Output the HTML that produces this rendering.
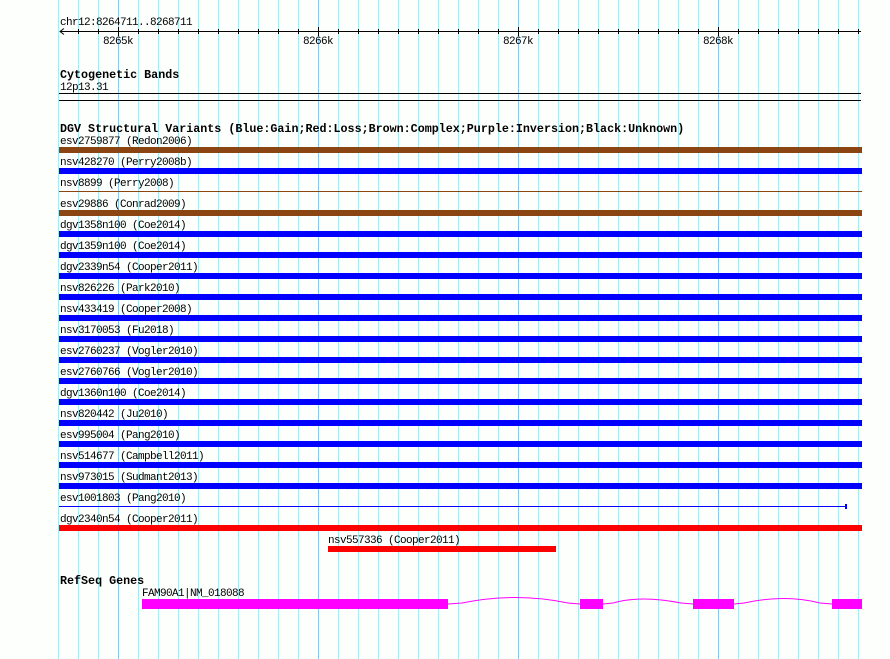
<!DOCTYPE html>
<html><head><meta charset="utf-8"><style>
html,body{margin:0;padding:0;background:#fdfffd;}
svg{display:block}
text{font-family:"Liberation Mono",monospace;font-size:11px;letter-spacing:-0.6px;fill:#000}
.b{font-weight:bold;font-size:11.7px;letter-spacing:0px}
</style></head><body>
<svg width="890" height="659" viewBox="0 0 890 659" xmlns="http://www.w3.org/2000/svg">
<rect width="890" height="659" fill="#fdfffd"/>
<g id="grid" stroke-width="1"></g>
<text x="60" y="25">chr12:8264711..8268711</text>
<line x1="60" y1="31.5" x2="861" y2="31.5" stroke="#000"/>
<path d="M64 28.5 L60 31.5 L64 34.5" fill="none" stroke="#000"/>
<g id="ticks" stroke="#000"></g>
<text x="103" y="44">8265k</text>
<text x="303" y="44">8266k</text>
<text x="503" y="44">8267k</text>
<text x="703" y="44">8268k</text>
<text class="b" x="60" y="78">Cytogenetic Bands</text>
<text x="60" y="90">12p13.31</text>
<line x1="59" y1="93.5" x2="861" y2="93.5" stroke="#000"/>
<line x1="59" y1="100.5" x2="861" y2="100.5" stroke="#000"/>
<text class="b" x="60" y="132">DGV Structural Variants (Blue:Gain;Red:Loss;Brown:Complex;Purple:Inversion;Black:Unknown)</text>
<g id="rows"></g>
<text x="328" y="543">nsv557336 (Cooper2011)</text>
<rect x="328" y="546" width="228" height="6" fill="#ff0000"/>
<text class="b" x="60" y="584">RefSeq Genes</text>
<text x="142" y="596">FAM90A1|NM_018088</text>
<path d="M448 604 L462 603 Q515 592 568 603 L580 604 M603 604 L613 603 Q640 595 681 603 L693 604 M734 604 L744 603 Q785 594 820 603 L832 604" fill="none" stroke="#ff00ff" stroke-width="1"/>
<rect x="142" y="599" width="306" height="10" fill="#ff00ff"/>
<rect x="580" y="599" width="23" height="10" fill="#ff00ff"/>
<rect x="693" y="599" width="41" height="10" fill="#ff00ff"/>
<rect x="832" y="599" width="30" height="10" fill="#ff00ff"/>
</svg>
<script>
var ns="http://www.w3.org/2000/svg";
function el(t,a,p){var e=document.createElementNS(ns,t);for(var k in a)e.setAttribute(k,a[k]);p.appendChild(e);return e;}
var g=document.getElementById('grid');
for(var x=58;x<=858;x+=20){var maj=((x-118)%200===0);el('line',{x1:x+.5,y1:0,x2:x+.5,y2:659,stroke:maj?'#88c8ec':'#a8eaf2'},g);}
var t=document.getElementById('ticks');
for(var x=78;x<=858;x+=20){var maj=((x-118)%200===0);el('line',{x1:x+.5,y1:maj?27:29,x2:x+.5,y2:maj?36:34},t);}
var rows=[["esv2759877 (Redon2006)","#8b4513",6],["nsv428270 (Perry2008b)","#0000ff",6],["nsv8899 (Perry2008)","#8b4513",1],["esv29886 (Conrad2009)","#8b4513",6],["dgv1358n100 (Coe2014)","#0000ff",6],["dgv1359n100 (Coe2014)","#0000ff",6],["dgv2339n54 (Cooper2011)","#0000ff",6],["nsv826226 (Park2010)","#0000ff",6],["nsv433419 (Cooper2008)","#0000ff",6],["nsv3170053 (Fu2018)","#0000ff",6],["esv2760237 (Vogler2010)","#0000ff",6],["esv2760766 (Vogler2010)","#0000ff",6],["dgv1360n100 (Coe2014)","#0000ff",6],["nsv820442 (Ju2010)","#0000ff",6],["esv995004 (Pang2010)","#0000ff",6],["nsv514677 (Campbell2011)","#0000ff",6],["nsv973015 (Sudmant2013)","#0000ff",6],["esv1001803 (Pang2010)","#0000ff",1],["dgv2340n54 (Cooper2011)","#ff0000",6]];
var r=document.getElementById('rows');
rows.forEach(function(d,i){var y=147+21*i;var tx=el('text',{x:60,y:y-3},r);tx.textContent=d[0];
if(d[2]==6){el('rect',{x:59,y:y,width:803,height:6,fill:d[1]},r);}
else if(i==17){el('rect',{x:59,y:y+2,width:787,height:1,fill:d[1]},r);el('rect',{x:845,y:y,width:2,height:5,fill:d[1]},r);}
else{el('rect',{x:59,y:y+2,width:803,height:1,fill:d[1]},r);}});
</script>
</body></html>
